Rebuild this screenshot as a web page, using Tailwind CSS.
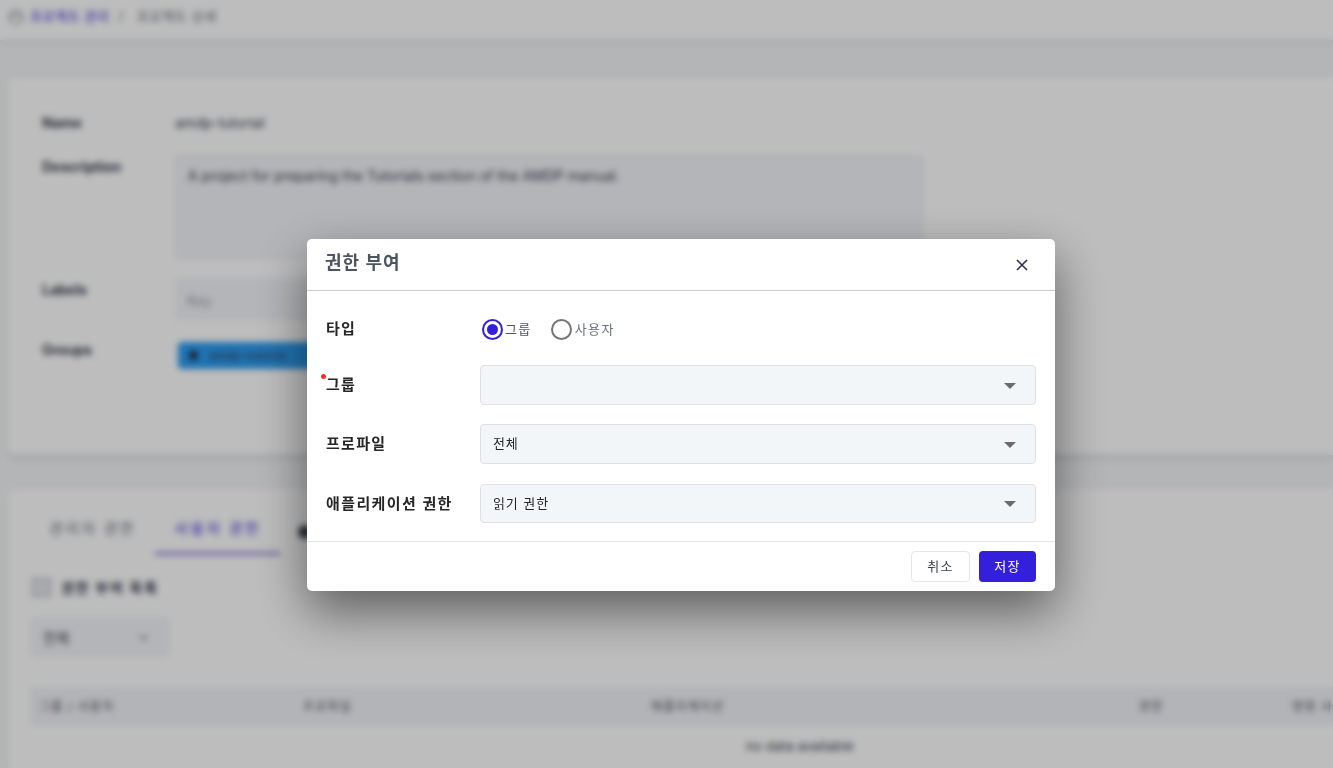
<!DOCTYPE html>
<html lang="ko">
<head>
<meta charset="utf-8">
<script src="https://cdn.jsdelivr.net/npm/@tailwindcss/browser@4"></script>
</head>
<body class="relative h-[768px] w-[1333px] overflow-hidden bg-[#f3f4f6] font-['Inter','Noto_Sans_CJK_KR',sans-serif] text-[#374151]">
  <!-- page behind the dialog -->
  <div class="flex h-[768px] flex-col">
    <div class="flex h-[41px] shrink-0 items-start border-b border-[#e5e7eb] bg-white pl-[8px] pt-[7px] text-[13px] tracking-[0.6px] shadow-sm">
      <svg class="mt-[2px] mr-[6px]" width="16" height="16" viewBox="0 0 16 16" fill="none" stroke="#6b7280" stroke-width="1.2"><circle cx="8" cy="8" r="6.5"/><path d="M2 6h12"/></svg>
      <span class="text-[#3b2fd8]">프로젝트 관리</span><span class="ml-[9px] mr-[13px] text-[#6b7280]">/</span><span class="text-[#6b7280]">프로젝트 상세</span>
    </div>
    <div class="ml-[8px] mt-[37px] h-[377px] shrink-0 rounded-l-md bg-white pl-[34px] pt-[34px] text-[14px] shadow-md">
      <div class="flex h-[20px] items-center"><span class="w-[133px] font-bold">Name</span><span>amdp-tutorial</span></div>
      <div class="mt-[23px] flex"><span class="w-[133px] pt-[1px] font-bold">Description</span><div class="h-[104px] w-[748px] rounded border border-[#e5e7eb] bg-[#f3f4f8] px-3 py-[9px]">A project for preparing the Tutorials section of the AMDP manual.</div></div>
      <div class="mt-[19px] flex"><span class="w-[133px] pt-[1px] font-bold">Labels</span><div class="h-[42px] w-[748px] rounded bg-[#f3f4f8] px-3 py-3 text-[#9ca3af]">Key</div></div>
      <div class="mt-[19px] flex items-start"><span class="w-[133px] font-bold">Groups</span><div class="ml-[3px] mt-[3px] flex h-[27px] w-[200px] items-center gap-[11px] rounded bg-[#2b9bf0] pl-[11px] text-[12px]"><span class="size-[9px] rounded-full bg-[#1f2937]"></span>amdp-tutorial</div></div>
    </div>
    <div class="ml-[8px] mt-[34px] w-[1700px] flex-1 rounded-tl-md bg-white pl-[22px] shadow-md">
      <div class="flex h-[66px] items-end text-[15px] tracking-[2.2px]">
        <span class="flex h-[40px] w-[125px] justify-center pt-[3px] text-[#6b7280]">관리자 권한</span>
        <span class="flex h-[40px] w-[125px] justify-center border-b-[3px] border-[#8c7ad8] pt-[3px] text-[#3b2fd8]">사용자 권한</span>
        <span class="ml-[18px] mb-[16px] size-[14px] rounded-full bg-[#374151]"></span>
      </div>
      <div class="ml-[2px] mt-[22px] flex h-[20px] items-center gap-[10px] text-[14px] font-bold tracking-[1.7px]"><span class="size-[19px] border border-[#9ca3af] bg-[#e5e7eb]"></span>권한 부여 목록</div>
      <div class="mt-[20px] flex h-[40px] w-[140px] items-center justify-between rounded bg-[#f3f4f8] pl-[13px] pr-[22px] text-[14px]">전체<svg width="9" height="5" viewBox="0 0 10 6" fill="none" stroke="#4b5563" stroke-width="1.5"><path d="M1 1l4 4 4-4"/></svg></div>
      <div class="mt-[30px] flex h-[39px] w-[1540px] items-center whitespace-nowrap bg-[#f1f3f7] text-[12px] tracking-[1.1px] text-[#4b5563]">
        <span class="w-[264px] pl-[9px]">그룹 / 사용자</span><span class="w-[348px] pl-[9px]">프로파일</span><span class="w-[488px] pl-[9px]">애플리케이션</span><span class="w-[153px] pl-[9px]">권한</span><span class="pl-[9px]">명령 사용</span>
      </div>
      <div class="flex h-[42px] w-[1540px] items-center justify-center text-[13px] tracking-[0.25px]">no data available</div>
    </div>
  </div>

  <!-- modal overlay -->
  <div class="absolute inset-0 flex items-start bg-black/[0.26] backdrop-blur-[3px]">
    <div class="ml-[307px] mt-[239px] flex h-[352px] w-[748px] flex-col rounded-[5px] bg-white shadow-[0_20px_50px_rgba(0,0,0,0.5)]">
      <div class="flex h-[52px] shrink-0 items-center justify-between border-b border-[#c9cad3] pl-[18px] pr-[25px]">
        <h2 class="-mt-[3px] text-[18px] font-bold leading-[24px] tracking-[1px] text-[#4b5563]">권한 부여</h2>
        <svg class="mt-[1px]" width="16" height="16" viewBox="0 0 16 16" fill="none" stroke="#2d3050" stroke-width="1.6"><path d="M3 3l10 10M13 3L3 13"/></svg>
      </div>
      <div class="flex-1 pl-[19px] pr-[19px] text-[#262626]">
        <div class="flex h-[39px] items-center pt-[37px]">
          <span class="w-[154px] text-[15px] font-semibold leading-[20px] tracking-[1.3px]">타입</span>
          <label class="ml-[2px] flex items-center gap-[2px] text-[13px] leading-[20px] tracking-[1.4px] text-[#4b5563]">
            <span class="flex size-[21px] items-center justify-center rounded-full border-[2px] border-[#3420dc]"><span class="size-[11px] rounded-full bg-[#3420dc]"></span></span>그룹
          </label>
          <label class="ml-[19px] flex items-center gap-[3px] text-[13px] leading-[20px] tracking-[1.4px] text-[#6b7280]">
            <span class="size-[21px] rounded-full border-[2px] border-[#757575]"></span>사용자
          </label>
        </div>
        <div class="relative mt-[35px] flex items-center">
          <span class="absolute -left-[5px] top-[9px] size-[5px] rounded-full bg-[#f5302a]"></span>
          <span class="w-[154px] text-[15px] font-semibold leading-[20px] tracking-[1.3px]">그룹</span>
          <div class="flex h-[40px] w-[556px] items-center justify-between rounded-[4px] border border-[#dfe1e6] bg-[#f3f6f9] pl-3 pr-[19px] text-[13px] tracking-[0.9px]">
            <span></span><svg class="mt-[1px]" width="12" height="6" viewBox="0 0 12 6" fill="#6b6b6b"><path d="M0 0h12L6 6z"/></svg>
          </div>
        </div>
        <div class="mt-[19px] flex items-center">
          <span class="w-[154px] text-[15px] font-semibold leading-[20px] tracking-[1.3px]">프로파일</span>
          <div class="flex h-[40px] w-[556px] items-center justify-between rounded-[4px] border border-[#dfe1e6] bg-[#f3f6f9] pl-3 pr-[19px] text-[13px] tracking-[0.9px]">
            <span>전체</span><svg class="mt-[1px]" width="12" height="6" viewBox="0 0 12 6" fill="#6b6b6b"><path d="M0 0h12L6 6z"/></svg>
          </div>
        </div>
        <div class="mt-[20px] flex items-center">
          <span class="w-[154px] whitespace-nowrap text-[15px] font-semibold leading-[20px] tracking-[1.4px]">애플리케이션 권한</span>
          <div class="flex h-[39px] w-[556px] items-center justify-between rounded-[4px] border border-[#dfe1e6] bg-[#f3f6f9] pl-3 pr-[19px] text-[13px] tracking-[0.9px]">
            <span>읽기 권한</span><svg class="mt-[1px]" width="12" height="6" viewBox="0 0 12 6" fill="#6b6b6b"><path d="M0 0h12L6 6z"/></svg>
          </div>
        </div>
      </div>
      <div class="flex h-[50px] shrink-0 items-center justify-end gap-[9px] border-t border-[#e5e7eb] pr-[19px] text-[13px] tracking-[1.2px]">
        <button class="h-[31px] w-[59px] rounded-[4px] border border-[#e5e7eb] bg-white text-[#374151]">취소</button>
        <button class="h-[31px] w-[57px] rounded-[4px] bg-[#3420dc] text-white">저장</button>
      </div>
    </div>
  </div>
</body>
</html>
